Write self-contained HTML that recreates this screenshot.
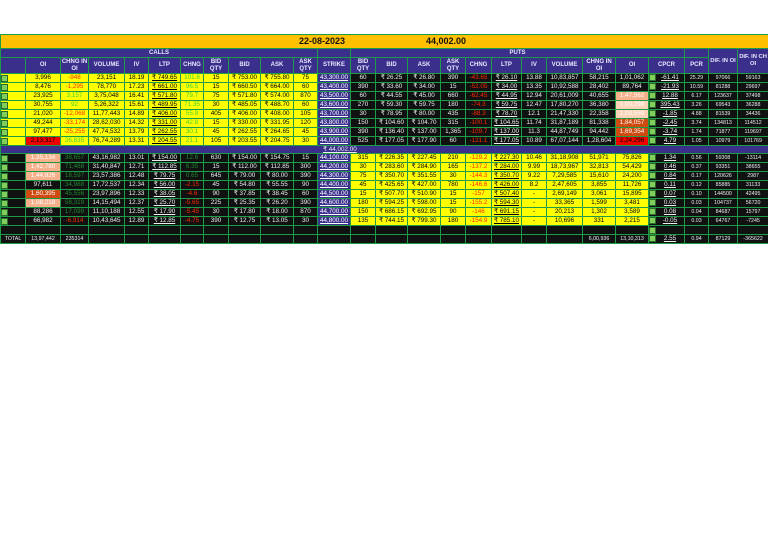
<!DOCTYPE html>
<html><head><meta charset="utf-8">
<style>
body{margin:0;background:#fff;width:768px;height:543px;overflow:hidden;font-family:"Liberation Sans",sans-serif;}
table{position:absolute;left:0;top:34px;border-collapse:collapse;table-layout:fixed;width:768px;}
td{border:1px solid #1c9c46;padding:0;height:8px;line-height:8px;font-size:6.3px;text-align:center;white-space:nowrap;overflow:hidden;}
td.y{background:#ffff00;color:#000}
td.k{background:#111;color:#eee}
td.p{background:#3b2f8c;color:#fff;text-decoration:underline}
.r{color:#ff2a00!important}
.g{color:#3ccf3c!important}
.dg{color:#1e8a2e!important}
.u{text-decoration:underline}
.s1{background:#f6b08c!important}
.s2{background:#fbd3b8!important}
.o{background:#cf4a10!important;color:#fff!important}
.rd{background:#f20000!important;color:#000!important}
.h td{background:#3b2f8c;color:#e8e8ff;font-weight:bold;font-size:6px;line-height:7px;height:15px;white-space:normal}
.h1 td{background:#3b2f8c;color:#e8e8ff;font-weight:bold;font-size:6px;line-height:8px;height:8px}
.h1 td.dif{line-height:7px;white-space:normal;font-size:5.8px}
.ic{display:inline-block;width:5px;height:5px;background:#7fcf5a;border:1px solid #2d6b2d;float:left;margin-top:0px}
td.sm{font-size:5.3px}
</style></head><body>
<table>
<colgroup>
<col style="width:25px"><col style="width:35px"><col style="width:28px"><col style="width:36px"><col style="width:24px"><col style="width:32px"><col style="width:23px"><col style="width:25px"><col style="width:32px"><col style="width:33px"><col style="width:24px"><col style="width:33px"><col style="width:25px"><col style="width:32px"><col style="width:33px"><col style="width:25px"><col style="width:26px"><col style="width:30px"><col style="width:25px"><col style="width:36px"><col style="width:33px"><col style="width:33px"><col style="width:36px"><col style="width:24px"><col style="width:29px"><col style="width:31px">
</colgroup>
<tr><td colspan="26" style="background:#ffc000;height:13px;position:relative;font-weight:bold;font-size:9px;color:#111;text-align:left"><span style="position:absolute;left:298px;top:2px">22-08-2023</span><span style="position:absolute;left:425px;top:2px">44,002.00</span></td></tr>
<tr class="h1"><td colspan="11">CALLS</td><td></td><td colspan="11">PUTS</td><td></td><td rowspan="2" class="dif">DIF. IN OI</td><td rowspan="2" class="dif">DIF. IN CH OI</td></tr>
<tr class="h"><td></td><td>OI</td><td>CHNG IN OI</td><td>VOLUME</td><td>IV</td><td>LTP</td><td>CHNG</td><td>BID QTY</td><td>BID</td><td>ASK</td><td>ASK QTY</td><td>STRIKE</td><td>BID QTY</td><td>BID</td><td>ASK</td><td>ASK QTY</td><td>CHNG</td><td>LTP</td><td>IV</td><td>VOLUME</td><td>CHNG IN OI</td><td>OI</td><td>CPCR</td><td>PCR</td></tr>

<tr><td class="y"><span class="ic"></span></td><td class="y">3,996</td><td class="y r">-948</td><td class="y">23,151</td><td class="y">18.19</td><td class="y u">₹ 749.65</td><td class="y g">101.6</td><td class="y">15</td><td class="y">₹ 753.00</td><td class="y">₹ 755.80</td><td class="y">75</td><td class="p">43,300.00</td><td class="k">60</td><td class="k">₹ 26.25</td><td class="k">₹ 26.80</td><td class="k">390</td><td class="k r">-43.65</td><td class="k u">₹ 26.10</td><td class="k">13.88</td><td class="k">10,83,857</td><td class="k">58,215</td><td class="k">1,01,062</td><td class="k u"><span class="ic"></span>-61.41</td><td class="k sm">25.29</td><td class="k sm">97066</td><td class="k sm">59163</td></tr>
<tr><td class="y"><span class="ic"></span></td><td class="y">8,476</td><td class="y r">-1,295</td><td class="y">78,770</td><td class="y">17.23</td><td class="y u">₹ 661.00</td><td class="y g">96.5</td><td class="y">15</td><td class="y">₹ 660.50</td><td class="y">₹ 664.00</td><td class="y">60</td><td class="p">43,400.00</td><td class="k">390</td><td class="k">₹ 33.60</td><td class="k">₹ 34.00</td><td class="k">15</td><td class="k r">-52.05</td><td class="k u">₹ 34.00</td><td class="k">13.35</td><td class="k">10,92,588</td><td class="k">28,402</td><td class="k">89,764</td><td class="k u"><span class="ic"></span>-21.93</td><td class="k sm">10.59</td><td class="k sm">81288</td><td class="k sm">29697</td></tr>
<tr><td class="y"><span class="ic"></span></td><td class="y">23,925</td><td class="y g">3,157</td><td class="y">3,75,048</td><td class="y">16.41</td><td class="y u">₹ 571.80</td><td class="y g">79.7</td><td class="y">75</td><td class="y">₹ 571.80</td><td class="y">₹ 574.00</td><td class="y">870</td><td class="p">43,500.00</td><td class="k">60</td><td class="k">₹ 44.55</td><td class="k">₹ 45.00</td><td class="k">660</td><td class="k r">-62.45</td><td class="k u">₹ 44.95</td><td class="k">12.94</td><td class="k">20,61,009</td><td class="k">40,655</td><td class="k s1" style="color:#fff">1,47,562</td><td class="k u"><span class="ic"></span>12.88</td><td class="k sm">6.17</td><td class="k sm">123637</td><td class="k sm">37498</td></tr>
<tr><td class="y"><span class="ic"></span></td><td class="y">30,755</td><td class="y g">92</td><td class="y">5,26,322</td><td class="y">15.61</td><td class="y u">₹ 489.95</td><td class="y g">71.35</td><td class="y">30</td><td class="y">₹ 485.05</td><td class="y">₹ 488.70</td><td class="y">60</td><td class="p">43,600.00</td><td class="k">270</td><td class="k">₹ 59.30</td><td class="k">₹ 59.75</td><td class="k">180</td><td class="k r">-74.3</td><td class="k u">₹ 59.75</td><td class="k">12.47</td><td class="k">17,80,270</td><td class="k">36,380</td><td class="k s2" style="color:#fff">1,00,298</td><td class="k u"><span class="ic"></span>395.43</td><td class="k sm">3.26</td><td class="k sm">69543</td><td class="k sm">36288</td></tr>
<tr><td class="y"><span class="ic"></span></td><td class="y">21,020</td><td class="y r">-12,068</td><td class="y">11,77,443</td><td class="y">14.89</td><td class="y u">₹ 406.00</td><td class="y g">55.9</td><td class="y">405</td><td class="y">₹ 406.00</td><td class="y">₹ 408.00</td><td class="y">105</td><td class="p">43,700.00</td><td class="k">30</td><td class="k">₹ 78.95</td><td class="k">₹ 80.00</td><td class="k">435</td><td class="k r">-88.3</td><td class="k u">₹ 78.70</td><td class="k">12.1</td><td class="k">21,47,330</td><td class="k">22,358</td><td class="k s2" style="color:#fff">1,03,559</td><td class="k u"><span class="ic"></span>-1.85</td><td class="k sm">4.88</td><td class="k sm">81539</td><td class="k sm">34436</td></tr>
<tr><td class="y"><span class="ic"></span></td><td class="y">49,244</td><td class="y r">-33,174</td><td class="y">28,62,030</td><td class="y">14.32</td><td class="y u">₹ 331.00</td><td class="y g">42.8</td><td class="y">15</td><td class="y">₹ 330.00</td><td class="y">₹ 331.95</td><td class="y">120</td><td class="p">43,800.00</td><td class="k">150</td><td class="k">₹ 104.60</td><td class="k">₹ 104.70</td><td class="k">315</td><td class="k r">-100.1</td><td class="k u">₹ 104.65</td><td class="k">11.74</td><td class="k">31,87,189</td><td class="k">81,338</td><td class="k o">1,84,057</td><td class="k u"><span class="ic"></span>-2.45</td><td class="k sm">3.74</td><td class="k sm">134813</td><td class="k sm">114512</td></tr>
<tr><td class="y"><span class="ic"></span></td><td class="y">97,477</td><td class="y r">-25,255</td><td class="y">47,74,532</td><td class="y">13.79</td><td class="y u">₹ 262.55</td><td class="y g">30.1</td><td class="y">45</td><td class="y">₹ 262.55</td><td class="y">₹ 264.65</td><td class="y">45</td><td class="p">43,900.00</td><td class="k">390</td><td class="k">₹ 136.40</td><td class="k">₹ 137.00</td><td class="k">1,365</td><td class="k r">-109.7</td><td class="k u">₹ 137.00</td><td class="k">11.3</td><td class="k">44,87,749</td><td class="k">94,442</td><td class="k o">1,69,354</td><td class="k u"><span class="ic"></span>-3.74</td><td class="k sm">1.74</td><td class="k sm">71877</td><td class="k sm">119697</td></tr>
<tr><td class="y"><span class="ic"></span></td><td class="y rd">2,13,317</td><td class="y g">26,835</td><td class="y">76,74,289</td><td class="y">13.31</td><td class="y u">₹ 204.55</td><td class="y g">21.1</td><td class="y">105</td><td class="y">₹ 203.55</td><td class="y">₹ 204.75</td><td class="y">30</td><td class="p">44,000.00</td><td class="k">525</td><td class="k">₹ 177.05</td><td class="k">₹ 177.90</td><td class="k">60</td><td class="k r">-121.1</td><td class="k u">₹ 177.05</td><td class="k">10.89</td><td class="k">67,07,144</td><td class="k">1,28,604</td><td class="k rd">2,24,296</td><td class="k u"><span class="ic"></span>4.79</td><td class="k sm">1.05</td><td class="k sm">10979</td><td class="k sm">101769</td></tr>

<tr><td colspan="26" style="background:#3b2f8c;color:#eee;text-align:left;padding-left:322px;height:6px;line-height:7px;text-decoration:underline">₹ 44,002.00</td></tr>

<tr><td class="k"><span class="ic"></span></td><td class="k s1" style="color:#fff">1,35,134</td><td class="k dg">38,657</td><td class="k">43,16,982</td><td class="k">13.01</td><td class="k u">₹ 154.00</td><td class="k dg">12.6</td><td class="k">630</td><td class="k">₹ 154.00</td><td class="k">₹ 154.75</td><td class="k">15</td><td class="p">44,100.00</td><td class="y">315</td><td class="y">₹ 226.35</td><td class="y">₹ 227.45</td><td class="y">210</td><td class="y r">-129.2</td><td class="y u">₹ 227.30</td><td class="y">10.46</td><td class="y">31,18,908</td><td class="y">51,971</td><td class="y">75,826</td><td class="k u"><span class="ic"></span>1.34</td><td class="k sm">0.56</td><td class="k sm">59308</td><td class="k sm">-13114</td></tr>
<tr><td class="k"><span class="ic"></span></td><td class="k s1" style="color:#fff">1,42,780</td><td class="k dg">71,468</td><td class="k">31,40,847</td><td class="k">12.71</td><td class="k u">₹ 112.85</td><td class="k dg">6.35</td><td class="k">15</td><td class="k">₹ 112.00</td><td class="k">₹ 112.85</td><td class="k">300</td><td class="p">44,200.00</td><td class="y">30</td><td class="y">₹ 283.60</td><td class="y">₹ 284.90</td><td class="y">165</td><td class="y r">-137.2</td><td class="y u">₹ 284.00</td><td class="y">9.99</td><td class="y">18,73,967</td><td class="y">32,813</td><td class="y">54,429</td><td class="k u"><span class="ic"></span>0.46</td><td class="k sm">0.37</td><td class="k sm">93351</td><td class="k sm">38655</td></tr>
<tr><td class="k"><span class="ic"></span></td><td class="k s1" style="color:#fff">1,44,826</td><td class="k dg">18,597</td><td class="k">23,57,386</td><td class="k">12.48</td><td class="k u">₹ 79.75</td><td class="k dg">0.65</td><td class="k">645</td><td class="k">₹ 79.00</td><td class="k">₹ 80.00</td><td class="k">390</td><td class="p">44,300.00</td><td class="y">75</td><td class="y">₹ 350.70</td><td class="y">₹ 351.55</td><td class="y">30</td><td class="y r">-144.3</td><td class="y u">₹ 350.70</td><td class="y">9.22</td><td class="y">7,29,585</td><td class="y">15,610</td><td class="y">24,200</td><td class="k u"><span class="ic"></span>0.84</td><td class="k sm">0.17</td><td class="k sm">120626</td><td class="k sm">2987</td></tr>
<tr><td class="k"><span class="ic"></span></td><td class="k">97,611</td><td class="k dg">34,988</td><td class="k">17,72,537</td><td class="k">12.34</td><td class="k u">₹ 56.00</td><td class="k r">-2.15</td><td class="k">45</td><td class="k">₹ 54.80</td><td class="k">₹ 55.55</td><td class="k">90</td><td class="p">44,400.00</td><td class="y">45</td><td class="y">₹ 425.65</td><td class="y">₹ 427.00</td><td class="y">780</td><td class="y r">-146.6</td><td class="y u">₹ 426.00</td><td class="y">8.2</td><td class="y">2,47,605</td><td class="y">3,855</td><td class="y">11,726</td><td class="k u"><span class="ic"></span>0.11</td><td class="k sm">0.12</td><td class="k sm">85885</td><td class="k sm">31133</td></tr>
<tr><td class="k"><span class="ic"></span></td><td class="k o">1,60,395</td><td class="k dg">45,556</td><td class="k">23,97,896</td><td class="k">12.33</td><td class="k u">₹ 38.05</td><td class="k r">-4.6</td><td class="k">90</td><td class="k">₹ 37.85</td><td class="k">₹ 38.45</td><td class="k">60</td><td class="p">44,500.00</td><td class="y">15</td><td class="y">₹ 507.70</td><td class="y">₹ 510.90</td><td class="y">15</td><td class="y r">-157</td><td class="y u">₹ 507.40</td><td class="y">-</td><td class="y">2,69,149</td><td class="y">3,061</td><td class="y">15,895</td><td class="k u"><span class="ic"></span>0.07</td><td class="k sm">0.10</td><td class="k sm">144500</td><td class="k sm">42495</td></tr>
<tr><td class="k"><span class="ic"></span></td><td class="k s1" style="color:#fff">1,08,218</td><td class="k dg">58,319</td><td class="k">14,15,494</td><td class="k">12.37</td><td class="k u">₹ 25.70</td><td class="k r">-5.65</td><td class="k">225</td><td class="k">₹ 25.35</td><td class="k">₹ 26.20</td><td class="k">390</td><td class="p">44,600.00</td><td class="y">180</td><td class="y">₹ 594.25</td><td class="y">₹ 598.00</td><td class="y">15</td><td class="y r">-155.2</td><td class="y u">₹ 594.30</td><td class="y">-</td><td class="y">33,365</td><td class="y">1,599</td><td class="y">3,481</td><td class="k u"><span class="ic"></span>0.03</td><td class="k sm">0.03</td><td class="k sm">104737</td><td class="k sm">56720</td></tr>
<tr><td class="k"><span class="ic"></span></td><td class="k">88,286</td><td class="k dg">17,099</td><td class="k">11,10,188</td><td class="k">12.55</td><td class="k u">₹ 17.90</td><td class="k r">-5.45</td><td class="k">30</td><td class="k">₹ 17.80</td><td class="k">₹ 18.00</td><td class="k">870</td><td class="p">44,700.00</td><td class="y">150</td><td class="y">₹ 686.15</td><td class="y">₹ 692.95</td><td class="y">90</td><td class="y r">-146</td><td class="y u">₹ 691.15</td><td class="y">-</td><td class="y">20,213</td><td class="y">1,302</td><td class="y">3,589</td><td class="k u"><span class="ic"></span>0.08</td><td class="k sm">0.04</td><td class="k sm">84687</td><td class="k sm">15797</td></tr>
<tr><td class="k"><span class="ic"></span></td><td class="k">66,982</td><td class="k r">-6,914</td><td class="k">10,43,645</td><td class="k">12.89</td><td class="k u">₹ 12.85</td><td class="k r">-4.75</td><td class="k">390</td><td class="k">₹ 12.75</td><td class="k">₹ 13.05</td><td class="k">30</td><td class="p">44,800.00</td><td class="y">135</td><td class="y">₹ 744.15</td><td class="y">₹ 799.30</td><td class="y">180</td><td class="y r">-154.9</td><td class="y u">₹ 785.10</td><td class="y">-</td><td class="y">10,696</td><td class="y">331</td><td class="y">2,215</td><td class="k u"><span class="ic"></span>-0.05</td><td class="k sm">0.03</td><td class="k sm">64767</td><td class="k sm">-7245</td></tr>

<tr><td class="k" style="height:7px"></td><td class="k"></td><td class="k"></td><td class="k"></td><td class="k"></td><td class="k"></td><td class="k"></td><td class="k"></td><td class="k"></td><td class="k"></td><td class="k"></td><td class="k"></td><td class="k"></td><td class="k"></td><td class="k"></td><td class="k"></td><td class="k"></td><td class="k"></td><td class="k"></td><td class="k"></td><td class="k"></td><td class="k"></td><td class="k"><span class="ic"></span></td><td class="k"></td><td class="k"></td><td class="k"></td></tr>
<tr><td class="k sm" style="height:8px">TOTAL</td><td class="k sm">13,97,442</td><td class="k sm">235314</td><td class="k"></td><td class="k"></td><td class="k"></td><td class="k"></td><td class="k"></td><td class="k"></td><td class="k"></td><td class="k"></td><td class="k"></td><td class="k"></td><td class="k"></td><td class="k"></td><td class="k"></td><td class="k"></td><td class="k"></td><td class="k"></td><td class="k"></td><td class="k sm">6,00,936</td><td class="k sm">13,10,313</td><td class="k u"><span class="ic"></span>2.55</td><td class="k sm">0.94</td><td class="k sm">87129</td><td class="k sm">-365622</td></tr>
</table>
</body></html>
